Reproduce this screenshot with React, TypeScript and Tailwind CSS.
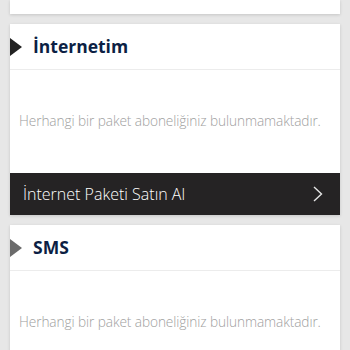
import React from 'react';

const font = { fontFamily: '"Open Sans", "Noto Sans", sans-serif' };

const Section: React.FC<{ title: string; active?: boolean; children?: React.ReactNode }> = ({ title, active, children }) => (
  <div className="bg-white shadow-[0_1px_3px_rgba(0,0,0,0.15)]">
    <div className="h-[46px] flex items-center border-b border-[#ececec]">
      <svg width="12" height="18" viewBox="0 0 12 18" className="shrink-0">
        <polygon points="0,0 12,9 0,18" fill={active ? '#222222' : '#6b6b6b'} />
      </svg>
      <h2 className="ml-[11px] text-[17.5px] font-bold text-[#0c1f44] tracking-[0px]">{title}</h2>
    </div>
    <div className="h-[103px] flex items-center pl-[9px]">
      <p className="text-[13.7px] text-[#a0a0a0] font-light tracking-[-0.1px]">Herhangi bir paket aboneliğiniz bulunmamaktadır.</p>
    </div>
    {children}
  </div>
);

const App: React.FC = () => {
  return (
    <div className="w-[350px] h-[350px] overflow-hidden bg-[#e7e7e7] px-[10px] flex flex-col gap-[10px]" style={font}>
      <div className="h-[14px] bg-white shrink-0 shadow-[0_1px_3px_rgba(0,0,0,0.15)]" />
      <Section title="İnternetim" active>
        <div className="h-[42px] bg-[#252324] flex items-center justify-between pl-[13px] pr-[17px]">
          <span className="text-white text-[16px] font-light">İnternet Paketi Satın Al</span>
          <svg width="10" height="16" viewBox="0 0 10 16">
            <polyline points="1,1 8.5,8 1,15" fill="none" stroke="#e5e5e5" strokeWidth="1.4" />
          </svg>
        </div>
      </Section>
      <Section title="SMS" />
    </div>
  );
};

export default App;
